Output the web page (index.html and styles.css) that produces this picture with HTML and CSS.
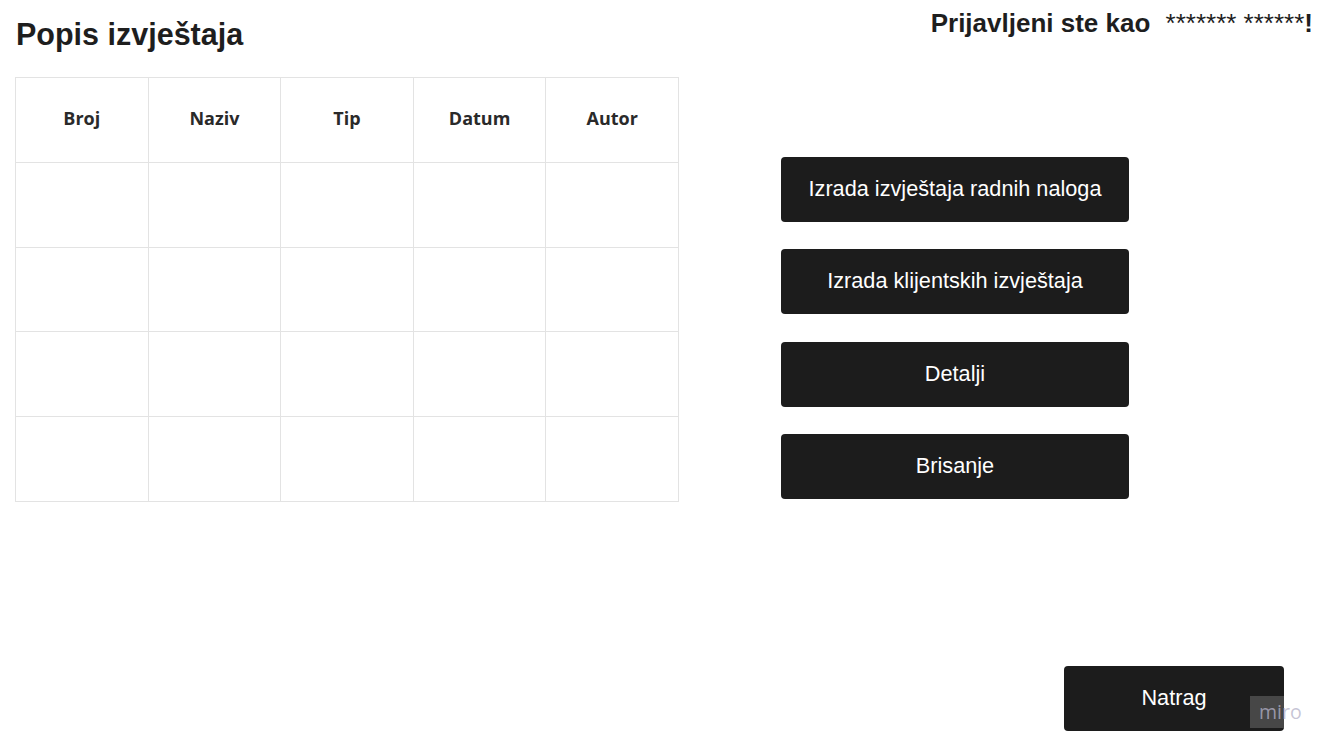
FILE: index.html
```html
<!DOCTYPE html>
<html lang="hr">
<head>
<meta charset="utf-8">
<title>Popis izvještaja</title>
<link rel="stylesheet" href="styles.css">
</head>
<body>
<div class="page">
  <header class="topbar">
    <h1 class="title">Popis izvještaja</h1>
    <div class="user">Prijavljeni ste kao <span class="stars">******* ******</span>!</div>
  </header>
  <main class="main">
    <table class="reports">
      <thead>
        <tr><th>Broj</th><th>Naziv</th><th>Tip</th><th>Datum</th><th>Autor</th></tr>
      </thead>
      <tbody>
        <tr><td></td><td></td><td></td><td></td><td></td></tr>
        <tr><td></td><td></td><td></td><td></td><td></td></tr>
        <tr><td></td><td></td><td></td><td></td><td></td></tr>
        <tr><td></td><td></td><td></td><td></td><td></td></tr>
      </tbody>
    </table>
    <div class="actions">
      <button class="btn">Izrada izvještaja radnih naloga</button>
      <button class="btn">Izrada klijentskih izvještaja</button>
      <button class="btn">Detalji</button>
      <button class="btn">Brisanje</button>
    </div>
  </main>
  <footer class="footer">
    <button class="btn btn-back">Natrag</button>
  </footer>
</div>
<div class="miro">miro</div>
</body>
</html>
```
FILE: styles.css
```css
* { box-sizing: border-box; }
html, body { margin: 0; padding: 0; background: #fff; }
body {
  font-family: "Liberation Sans", Arial, sans-serif;
  color: #1e1e1e;
  width: 1333px;
  height: 749px;
  overflow: hidden;
  position: relative;
}
.page {
  padding: 0 20px 0 15px;
}
.topbar {
  display: flex;
  justify-content: space-between;
  align-items: flex-start;
  height: 77px;
}
.title {
  margin: 18px 0 0 1px;
  font-size: 30.5px;
  line-height: 32px;
  font-weight: bold;
}
.user {
  margin-top: 7px;
  font-size: 26px;
  line-height: 32px;
  font-weight: bold;
  white-space: pre;
}
.stars {
  font-weight: normal;
  font-size: 26px;
  margin-left: 8px;
}
.main {
  display: flex;
  align-items: flex-start;
}
.reports {
  width: 664px;
  border-collapse: collapse;
  table-layout: fixed;
  border: 1px solid #c6c6c6;
}
.reports th, .reports td {
  border: 1px solid #e3e3e3;
  height: 84.8px;
  padding: 0;
}
.reports th {
  font-family: "Open Sans", sans-serif;
  font-weight: bold;
  font-size: 18px;
  color: #2a2a2a;
  text-align: center;
  padding-bottom: 4px;
}
.actions {
  display: flex;
  flex-direction: column;
  gap: 27.33px;
  margin: 80px 0 0 102px;
}
.btn {
  width: 348px;
  height: 65px;
  background: #1c1c1c;
  color: #fff;
  border: none;
  border-radius: 4px;
  font-family: "Liberation Sans", Arial, sans-serif;
  font-size: 21.7px;
  padding: 0 0 1px;
}
.footer {
  display: flex;
  justify-content: flex-end;
  margin-top: 164px;
  padding-right: 29px;
}
.btn-back {
  width: 220px;
}
.miro {
  position: absolute;
  left: 1250px;
  top: 696px;
  width: 34px;
  height: 32px;
  background: rgba(100, 100, 100, 0.6);
  color: rgba(180, 178, 200, 0.75);
  font-family: "Open Sans", sans-serif;
  font-size: 19.5px;
  line-height: 32px;
  padding-left: 9px;
  white-space: nowrap;
  overflow: visible;
}
```
